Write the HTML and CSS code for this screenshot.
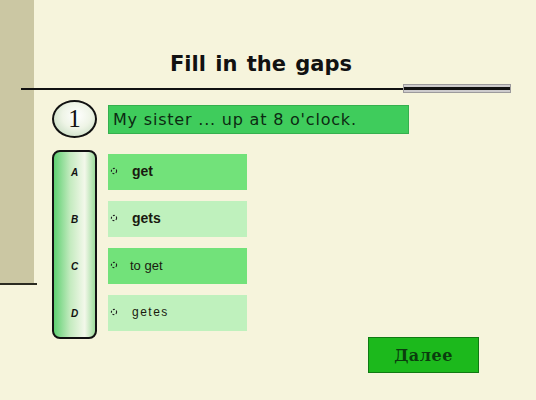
FILE: index.html
```html
<!DOCTYPE html>
<html lang="en">
<head>
<meta charset="utf-8">
<title>Fill in the gaps</title>
<link rel="stylesheet" href="styles.css">
</head>
<body>
<div class="page">
  <h1 class="title">Fill in the gaps</h1>
  <div class="rule">
    <div class="rule-line"></div>
    <div class="rule-end"><div class="rule-end-line"></div></div>
  </div>
  <div class="question">
    <div class="num">1</div>
    <div class="qbox">My sister ... up at 8 o'clock.</div>
  </div>
  <div class="answers">
    <div class="letters">
      <div class="letter">A</div>
      <div class="letter">B</div>
      <div class="letter">C</div>
      <div class="letter">D</div>
    </div>
    <div class="options">
      <div class="opt opt-bright"><svg class="radio" viewBox="0 0 8 8"><circle cx="4" cy="4" r="2.6"/></svg><span class="word">get</span></div>
      <div class="opt opt-light"><svg class="radio" viewBox="0 0 8 8"><circle cx="4" cy="4" r="2.6"/></svg><span class="word">gets</span></div>
      <div class="opt opt-bright"><svg class="radio" viewBox="0 0 8 8"><circle cx="4" cy="4" r="2.6"/></svg><span class="word word-sm">to get</span></div>
      <div class="opt opt-light"><svg class="radio" viewBox="0 0 8 8"><circle cx="4" cy="4" r="2.6"/></svg><span class="word word-sp">getes</span></div>
    </div>
  </div>
  <div class="footer">
    <div class="next">Далее</div>
  </div>
</div>
</body>
</html>
```

FILE: styles.css
```css
html, body {
  margin: 0;
  padding: 0;
}
body {
  background: #f6f4dc;
  font-family: "DejaVu Sans", "Liberation Sans", sans-serif;
}
.page {
  width: 536px;
  height: 400px;
  box-sizing: border-box;
  padding-top: 51px;
  background:
    linear-gradient(#2a2a20, #2a2a20) 0 283px / 37px 2px no-repeat,
    linear-gradient(#cbc7a3, #cbc7a3) 0 0 / 34px 283px no-repeat,
    #f6f4dc;
  overflow: hidden;
}
.title {
  margin: 0;
  padding-right: 14px;
  height: 26px;
  line-height: 26px;
  font-size: 21px;
  font-weight: bold;
  text-align: center;
  color: #111;
  word-spacing: 2px;
}
.rule {
  margin: 6px 0 0 21px;
  width: 490px;
  height: 11px;
  display: flex;
  align-items: center;
}
.rule-line {
  flex: 1;
  height: 2px;
  background: #111;
}
.rule-end {
  width: 108px;
  height: 9px;
  box-sizing: border-box;
  border: 1px solid #9c9a9c;
  background: #cdcbcd;
  display: flex;
  align-items: center;
}
.rule-end-line {
  flex: 1;
  height: 3px;
  background: #111;
}
.question {
  margin-top: 6px;
  padding-left: 52px;
  display: flex;
  align-items: center;
  gap: 11px;
}
.num {
  width: 45px;
  height: 38px;
  box-sizing: border-box;
  border: 2px solid #111;
  border-radius: 50%;
  background: radial-gradient(ellipse at 55% 40%, #ffffff 0%, #eef4e6 45%, #b9d4b4 100%);
  display: flex;
  align-items: center;
  justify-content: center;
  font-family: "Liberation Serif", serif;
  font-size: 25px;
  color: #111;
}
.qbox {
  width: 301px;
  height: 29px;
  box-sizing: border-box;
  background: #3fcc5c;
  border: 1px solid #35b04e;
  padding-left: 4px;
  display: flex;
  align-items: center;
  font-size: 16px;
  color: #0c2a12;
  letter-spacing: 0.8px;
}
.answers {
  margin-top: 12px;
  padding-left: 52px;
  display: flex;
  gap: 11px;
}
.letters {
  width: 45px;
  height: 189px;
  box-sizing: border-box;
  border: 2px solid #111;
  border-radius: 8px;
  background: linear-gradient(90deg, #5fd072 0%, #c5ebc0 40%, #f3f8ea 75%, #9edc9c 100%);
  padding-top: 2px;
  display: flex;
  flex-direction: column;
  gap: 11px;
}
.letter {
  height: 36px;
  display: flex;
  align-items: center;
  justify-content: center;
  font-family: "Liberation Sans", sans-serif;
  font-size: 10px;
  font-weight: bold;
  font-style: italic;
  color: #111;
}
.options {
  padding-top: 4px;
  display: flex;
  flex-direction: column;
  gap: 11px;
}
.opt {
  width: 139px;
  height: 36px;
  display: flex;
  align-items: center;
  box-sizing: border-box;
  padding-left: 2px;
}
.opt-bright {
  background: #72e27a;
}
.opt-light {
  background: #bff1bd;
}
.radio {
  width: 8px;
  height: 8px;
  fill: none;
  stroke: #222;
  stroke-width: 1.1;
  stroke-dasharray: 2 1.6;
  margin-right: 14px;
  margin-top: -2px;
}
.word {
  font-family: "Liberation Sans", sans-serif;
  font-size: 14px;
  font-weight: bold;
  color: #1a1a10;
  margin-top: -2px;
}
.word-sm {
  font-size: 13px;
  font-weight: normal;
  margin-left: -2px;
}
.word-sp {
  font-size: 12px;
  font-weight: normal;
  letter-spacing: 1.5px;
}
.footer {
  margin-top: -2px;
  display: flex;
  justify-content: flex-end;
  padding-right: 57px;
}
.next {
  width: 111px;
  height: 36px;
  box-sizing: border-box;
  background: #1cb91c;
  border: 1px solid #0f7a12;
  display: flex;
  align-items: center;
  justify-content: center;
  font-family: "DejaVu Serif", serif;
  font-size: 16px;
  font-weight: bold;
  color: #0b3d0e;
  letter-spacing: 0.5px;
}
```
